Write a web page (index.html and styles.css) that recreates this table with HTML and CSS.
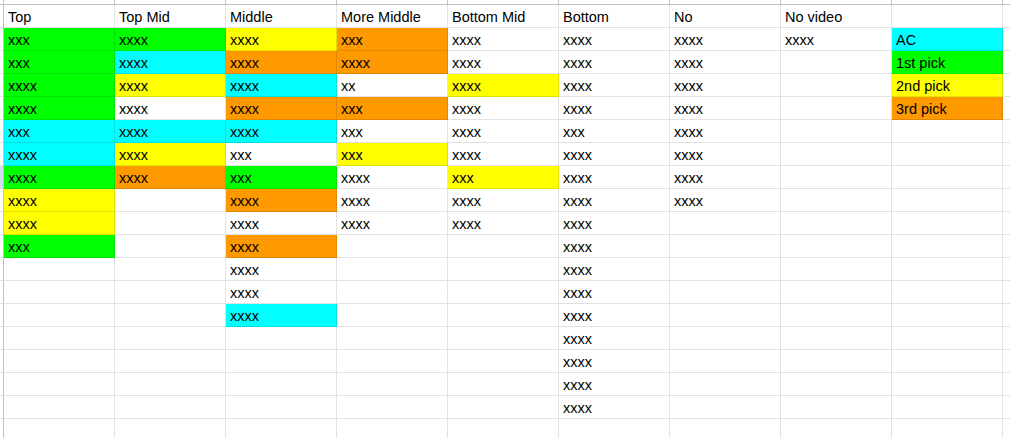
FILE: index.html
```html
<!DOCTYPE html>
<html lang="en">
<head>
<meta charset="utf-8">
<title>Sheet</title>
<link rel="stylesheet" href="styles.css">
</head>
<body>
<div class="sheet">
  <div class="corner"></div>
  <div class="colhead"></div><div class="colhead"></div><div class="colhead"></div><div class="colhead"></div><div class="colhead"></div><div class="colhead"></div><div class="colhead"></div><div class="colhead"></div><div class="colhead"></div><div class="colhead"></div>

  <div class="gut"></div>
  <div class="c">Top</div><div class="c">Top Mid</div><div class="c">Middle</div><div class="c">More Middle</div><div class="c">Bottom Mid</div><div class="c">Bottom</div><div class="c">No</div><div class="c">No video</div><div class="c"></div><div class="c"></div>

  <div class="gut"></div>
  <div class="c green">xxx</div><div class="c green">xxxx</div><div class="c yellow">xxxx</div><div class="c orange">xxx</div><div class="c">xxxx</div><div class="c">xxxx</div><div class="c">xxxx</div><div class="c">xxxx</div><div class="c cyan">AC</div><div class="c"></div>

  <div class="gut"></div>
  <div class="c green">xxx</div><div class="c cyan">xxxx</div><div class="c orange">xxxx</div><div class="c orange">xxxx</div><div class="c">xxxx</div><div class="c">xxxx</div><div class="c">xxxx</div><div class="c"></div><div class="c green">1st pick</div><div class="c"></div>

  <div class="gut"></div>
  <div class="c green">xxxx</div><div class="c yellow">xxxx</div><div class="c cyan">xxxx</div><div class="c">xx</div><div class="c yellow">xxxx</div><div class="c">xxxx</div><div class="c">xxxx</div><div class="c"></div><div class="c yellow">2nd pick</div><div class="c"></div>

  <div class="gut"></div>
  <div class="c green">xxxx</div><div class="c">xxxx</div><div class="c orange">xxxx</div><div class="c orange">xxx</div><div class="c">xxxx</div><div class="c">xxxx</div><div class="c">xxxx</div><div class="c"></div><div class="c orange">3rd pick</div><div class="c"></div>

  <div class="gut"></div>
  <div class="c cyan">xxx</div><div class="c cyan">xxxx</div><div class="c cyan">xxxx</div><div class="c">xxx</div><div class="c">xxxx</div><div class="c">xxx</div><div class="c">xxxx</div><div class="c"></div><div class="c"></div><div class="c"></div>

  <div class="gut"></div>
  <div class="c cyan">xxxx</div><div class="c yellow">xxxx</div><div class="c">xxx</div><div class="c yellow">xxx</div><div class="c">xxxx</div><div class="c">xxxx</div><div class="c">xxxx</div><div class="c"></div><div class="c"></div><div class="c"></div>

  <div class="gut sel"></div>
  <div class="c green">xxxx</div><div class="c orange">xxxx</div><div class="c green">xxx</div><div class="c">xxxx</div><div class="c yellow">xxx</div><div class="c">xxxx</div><div class="c">xxxx</div><div class="c"></div><div class="c"></div><div class="c"></div>

  <div class="gut"></div>
  <div class="c yellow">xxxx</div><div class="c"></div><div class="c orange">xxxx</div><div class="c">xxxx</div><div class="c">xxxx</div><div class="c">xxxx</div><div class="c">xxxx</div><div class="c"></div><div class="c"></div><div class="c"></div>

  <div class="gut"></div>
  <div class="c yellow">xxxx</div><div class="c"></div><div class="c">xxxx</div><div class="c">xxxx</div><div class="c">xxxx</div><div class="c">xxxx</div><div class="c"></div><div class="c"></div><div class="c"></div><div class="c"></div>

  <div class="gut"></div>
  <div class="c green">xxx</div><div class="c"></div><div class="c orange">xxxx</div><div class="c"></div><div class="c"></div><div class="c">xxxx</div><div class="c"></div><div class="c"></div><div class="c"></div><div class="c"></div>

  <div class="gut"></div>
  <div class="c"></div><div class="c"></div><div class="c">xxxx</div><div class="c"></div><div class="c"></div><div class="c">xxxx</div><div class="c"></div><div class="c"></div><div class="c"></div><div class="c"></div>

  <div class="gut"></div>
  <div class="c"></div><div class="c"></div><div class="c">xxxx</div><div class="c"></div><div class="c"></div><div class="c">xxxx</div><div class="c"></div><div class="c"></div><div class="c"></div><div class="c"></div>

  <div class="gut"></div>
  <div class="c"></div><div class="c"></div><div class="c cyan">xxxx</div><div class="c"></div><div class="c"></div><div class="c">xxxx</div><div class="c"></div><div class="c"></div><div class="c"></div><div class="c"></div>

  <div class="gut"></div>
  <div class="c"></div><div class="c"></div><div class="c"></div><div class="c"></div><div class="c"></div><div class="c">xxxx</div><div class="c"></div><div class="c"></div><div class="c"></div><div class="c"></div>

  <div class="gut"></div>
  <div class="c"></div><div class="c"></div><div class="c"></div><div class="c"></div><div class="c"></div><div class="c">xxxx</div><div class="c"></div><div class="c"></div><div class="c"></div><div class="c"></div>

  <div class="gut"></div>
  <div class="c"></div><div class="c"></div><div class="c"></div><div class="c"></div><div class="c"></div><div class="c">xxxx</div><div class="c"></div><div class="c"></div><div class="c"></div><div class="c"></div>

  <div class="gut"></div>
  <div class="c"></div><div class="c"></div><div class="c"></div><div class="c"></div><div class="c"></div><div class="c">xxxx</div><div class="c"></div><div class="c"></div><div class="c"></div><div class="c"></div>

  <div class="gut"></div>
  <div class="c"></div><div class="c"></div><div class="c"></div><div class="c"></div><div class="c"></div><div class="c"></div><div class="c"></div><div class="c"></div><div class="c"></div><div class="c"></div>
</div>
</body>
</html>
```

FILE: styles.css
```css
html, body {
  margin: 0;
  padding: 0;
  overflow: hidden;
  background: #ffffff;
}

body {
  width: 1010px;
  height: 438px;
  font-family: "Liberation Sans", Arial, sans-serif;
  font-size: 14.5px;
  color: #000000;
}

.sheet {
  display: grid;
  grid-template-columns: 4px repeat(9, 111px) 1fr;
  grid-template-rows: 5px;
  grid-auto-rows: 23px;
  width: 1010px;
  height: 438px;
  overflow: hidden;
}

.corner,
.colhead {
  box-sizing: border-box;
  border-right: 1px solid #c4c4c4;
  border-bottom: 1px solid #c0c0c0;
  background: #ffffff;
}

.gut {
  box-sizing: border-box;
  border-right: 1px solid #c0c0c0;
  border-bottom: 1px solid #e2e2e2;
  background: #ffffff;
}

.gut.sel {
  background: #d3dcee;
}

.c {
  box-sizing: border-box;
  min-width: 0;
  display: flex;
  align-items: flex-end;
  padding: 0 4px 1px;
  line-height: 17px;
  white-space: nowrap;
  overflow: hidden;
  border-right: 1px solid rgba(0, 0, 0, 0.113);
  border-bottom: 1px solid rgba(0, 0, 0, 0.113);
}

.green { background-color: #00ff00; }
.cyan { background-color: #00ffff; }
.yellow { background-color: #ffff00; }
.orange { background-color: #ff9900; }
```
